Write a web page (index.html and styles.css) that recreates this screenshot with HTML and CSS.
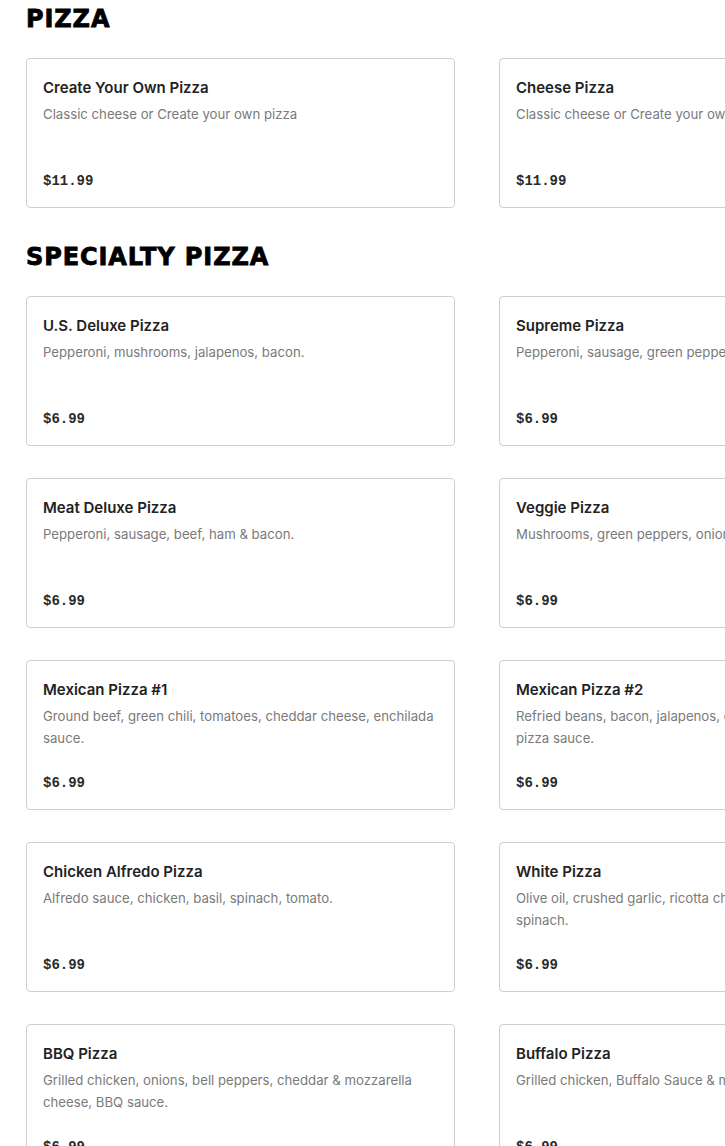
FILE: index.html
```html
<!DOCTYPE html>
<html lang="en">
<head>
<meta charset="utf-8">
<title>Menu</title>
<link rel="stylesheet" href="styles.css">
</head>
<body>
<main class="menu">
  <section class="section">
    <h2 class="section-title">PIZZA</h2>
    <div class="grid">
      <article class="card">
        <h3 class="card-title">Create Your Own Pizza</h3>
        <p class="card-desc">Classic cheese or Create your own pizza</p>
        <p class="card-price">$11.99</p>
      </article>
      <article class="card">
        <h3 class="card-title">Cheese Pizza</h3>
        <p class="card-desc">Classic cheese or Create your own pizza</p>
        <p class="card-price">$11.99</p>
      </article>
    </div>
  </section>
  <section class="section">
    <h2 class="section-title">SPECIALTY PIZZA</h2>
    <div class="grid">
      <article class="card">
        <h3 class="card-title">U.S. Deluxe Pizza</h3>
        <p class="card-desc">Pepperoni, mushrooms, jalapenos, bacon.</p>
        <p class="card-price">$6.99</p>
      </article>
      <article class="card">
        <h3 class="card-title">Supreme Pizza</h3>
        <p class="card-desc">Pepperoni, sausage, green peppers, onions, mushrooms.</p>
        <p class="card-price">$6.99</p>
      </article>
      <article class="card">
        <h3 class="card-title">Meat Deluxe Pizza</h3>
        <p class="card-desc">Pepperoni, sausage, beef, ham &amp; bacon.</p>
        <p class="card-price">$6.99</p>
      </article>
      <article class="card">
        <h3 class="card-title">Veggie Pizza</h3>
        <p class="card-desc">Mushrooms, green peppers, onions, black olives, tomatoes.</p>
        <p class="card-price">$6.99</p>
      </article>
      <article class="card">
        <h3 class="card-title">Mexican Pizza #1</h3>
        <p class="card-desc">Ground beef, green chili, tomatoes, cheddar cheese, enchilada sauce.</p>
        <p class="card-price">$6.99</p>
      </article>
      <article class="card">
        <h3 class="card-title">Mexican Pizza #2</h3>
        <p class="card-desc">Refried beans, bacon, jalapenos, onions, cheddar cheese, pizza sauce.</p>
        <p class="card-price">$6.99</p>
      </article>
      <article class="card">
        <h3 class="card-title">Chicken Alfredo Pizza</h3>
        <p class="card-desc">Alfredo sauce, chicken, basil, spinach, tomato.</p>
        <p class="card-price">$6.99</p>
      </article>
      <article class="card">
        <h3 class="card-title">White Pizza</h3>
        <p class="card-desc">Olive oil, crushed garlic, ricotta cheese, mozzarella cheese, spinach.</p>
        <p class="card-price">$6.99</p>
      </article>
      <article class="card">
        <h3 class="card-title">BBQ Pizza</h3>
        <p class="card-desc">Grilled chicken, onions, bell peppers, cheddar &amp; mozzarella cheese, BBQ sauce.</p>
        <p class="card-price">$6.99</p>
      </article>
      <article class="card">
        <h3 class="card-title">Buffalo Pizza</h3>
        <p class="card-desc">Grilled chicken, Buffalo Sauce &amp; mozzarella cheese.</p>
        <p class="card-price">$6.99</p>
      </article>
    </div>
  </section>
</main>
</body>
</html>
```
FILE: styles.css
```css
html {
  overflow: hidden;
}
body {
  margin: 0;
  background: #ffffff;
  font-family: Inter, "Noto Sans", "Liberation Sans", sans-serif;
  color: #222222;
}
.menu {
  padding: 5px 26px 40px;
  width: 902px;
}
.section + .section {
  margin-top: 35px;
}
.section-title {
  margin: 0 0 25px;
  font-family: "DejaVu Sans", "Liberation Sans", sans-serif;
  font-weight: 700;
  font-size: 24px;
  line-height: 28px;
  letter-spacing: 0.9px;
  color: #000000;
  -webkit-text-stroke: 0.8px #000000;
}
.grid {
  display: grid;
  grid-template-columns: 429px 429px;
  column-gap: 44px;
  row-gap: 32px;
}
.card {
  box-sizing: border-box;
  height: 150px;
  border: 1px solid #cfcfcf;
  border-radius: 4px;
  padding: 19px 18px 16px 16px;
  display: flex;
  flex-direction: column;
}
.card-title {
  margin: 0;
  font-size: 15px;
  line-height: 20px;
  font-weight: 600;
  color: #222222;
}
.card-desc {
  margin: 5px 0 0;
  min-height: 44px;
  font-size: 13.2px;
  line-height: 22px;
  color: #7a7a7a;
}
.card-price {
  margin: auto 0 0;
  font-family: "Liberation Mono", "DejaVu Sans Mono", monospace;
  font-weight: 700;
  font-size: 14px;
  line-height: 20px;
  color: #2a2a2a;
}
```
